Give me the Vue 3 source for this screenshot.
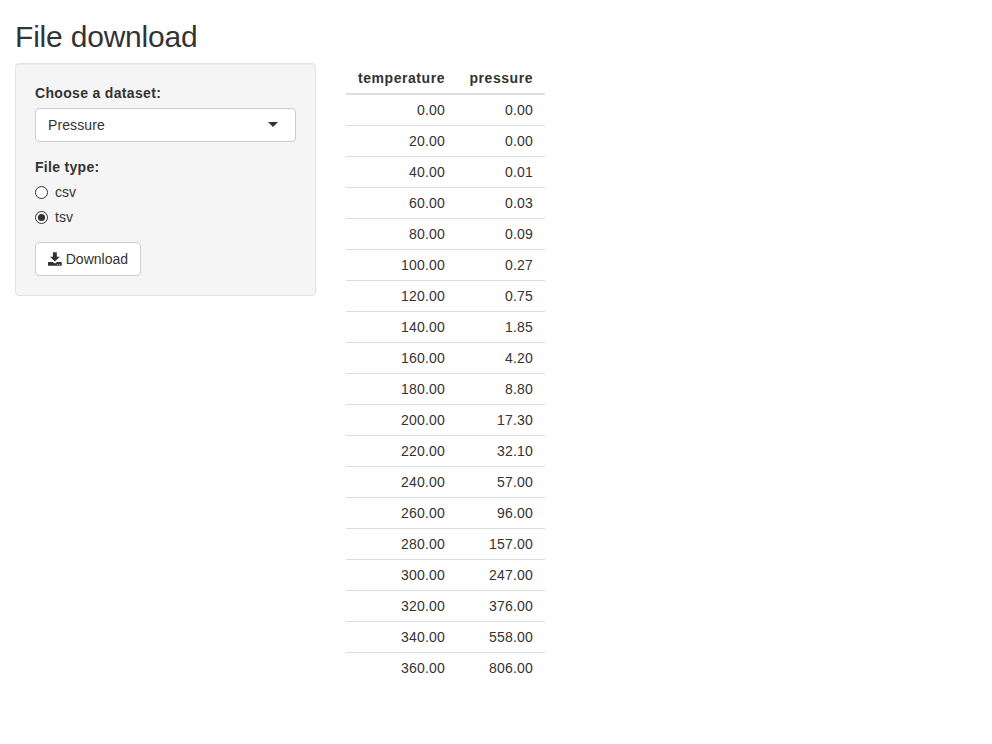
<script setup>
import { ref } from 'vue'

const dataset = ref('Pressure')
const fileType = ref('tsv')
const fileTypes = ['csv', 'tsv']
const pressures = [
  0, 0, 0.01, 0.03, 0.09, 0.27, 0.75, 1.85, 4.2, 8.8,
  17.3, 32.1, 57, 96, 157, 247, 376, 558, 806
]
const rows = pressures.map((p, i) => ({
  temperature: (i * 20).toFixed(2),
  pressure: p.toFixed(2)
}))
</script>

<template>
  <div class="page">
    <h2 class="title">File download</h2>
    <div class="layout">
      <form class="well" @submit.prevent>
        <div class="label choose">Choose a dataset:</div>
        <div class="select">
          <span class="select-value">{{ dataset }}</span>
          <svg class="caret" width="10" height="5" viewBox="0 0 10 5"><path d="M0 0H10L5 5Z" fill="#333" /></svg>
        </div>
        <div class="label">File type:</div>
        <label v-for="t in fileTypes" :key="t" class="radio" @click="fileType = t">
          <svg width="13" height="13" viewBox="0 0 13 13">
            <circle cx="6.5" cy="6.5" r="6" fill="#fff" stroke="#333" />
            <circle v-if="fileType === t" cx="6.5" cy="6.5" r="3.6" fill="#333" />
          </svg>
          <span>{{ t }}</span>
        </label>
        <button class="btn" type="button">
          <svg width="14" height="14" viewBox="0 0 14 14" fill="#333">
            <path d="M5 0H9V4.6H12L7 9.6L2 4.6H5Z" />
            <path fill-rule="evenodd" d="M0 10.6Q0 10 .6 10H4.9L6.2 11Q7 11.5 7.8 11L9.1 10H13.4Q14 10 14 10.6V13.4Q14 14 13.4 14H.6Q0 14 0 13.4ZM9.4 12.2V12.9H10.2V12.2ZM11.4 12.2V12.9H12.2V12.2Z" />
          </svg>
          <span>Download</span>
        </button>
      </form>
      <table class="table">
        <thead>
          <tr>
            <th class="c1">temperature</th>
            <th class="c2">pressure</th>
          </tr>
        </thead>
        <tbody>
          <tr v-for="r in rows" :key="r.temperature">
            <td>{{ r.temperature }}</td>
            <td>{{ r.pressure }}</td>
          </tr>
        </tbody>
      </table>
    </div>
  </div>
</template>

<style>
body {
  margin: 0;
  background: #fff;
}
</style>

<style scoped>
.page {
  padding: 20px 15px 0;
  font-family: "Liberation Sans", Arial, sans-serif;
  font-size: 14px;
  line-height: 20px;
  color: #333;
}
.title {
  margin: 0 0 10px;
  font-size: 30px;
  font-weight: 500;
  line-height: 33px;
  letter-spacing: -0.2px;
}
.layout {
  display: flex;
  align-items: flex-start;
  gap: 30px;
}
.well {
  box-sizing: border-box;
  width: 301px;
  height: 233px;
  padding: 19px;
  background: #f5f5f5;
  border: 1px solid #e3e3e3;
  border-radius: 4px;
  box-shadow: inset 0 1px 1px rgba(0, 0, 0, 0.05);
}
.label {
  font-weight: 700;
  letter-spacing: 0.3px;
  margin-bottom: 5px;
}
.choose {
  letter-spacing: 0.33px;
}
.select {
  box-sizing: border-box;
  display: flex;
  align-items: center;
  justify-content: space-between;
  height: 34px;
  padding: 0 17px 0 12px;
  margin-bottom: 15px;
  background: #fff;
  border: 1px solid #ccc;
  border-radius: 4px;
}
.select-value {
  letter-spacing: 0.1px;
}
.caret {
  margin-bottom: 1px;
}
.radio {
  display: flex;
  align-items: center;
  gap: 7px;
  height: 20px;
  margin-bottom: 5px;
}
.radio svg {
  display: block;
}
.btn {
  box-sizing: border-box;
  display: flex;
  align-items: center;
  gap: 4px;
  width: 106px;
  height: 34px;
  margin-top: 15px;
  padding: 0 12px;
  font: inherit;
  color: inherit;
  background: #fff;
  border: 1px solid #ccc;
  border-radius: 4px;
}
.table {
  border-spacing: 0;
  table-layout: fixed;
  width: 199px;
}
.table th,
.table td {
  padding: 5px 12px 5px 0;
  text-align: right;
  letter-spacing: 0.2px;
}
.table th {
  border-bottom: 2px solid #ddd;
  letter-spacing: 0.55px;
}
.c1 {
  width: 99px;
}
.c2 {
  width: 76px;
}
.table tbody tr + tr td {
  border-top: 1px solid #ddd;
}
</style>
